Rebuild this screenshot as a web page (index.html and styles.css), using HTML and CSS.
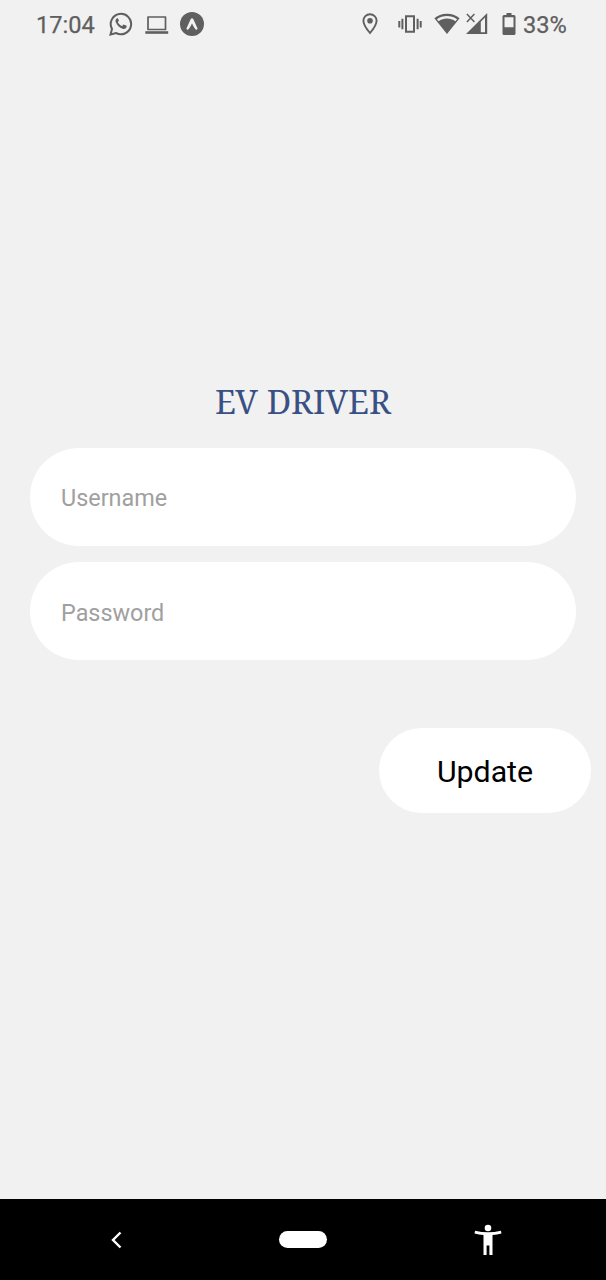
FILE: index.html
```html
<!DOCTYPE html>
<html lang="en">
<head>
<meta charset="utf-8">
<title>EV Driver</title>
<link rel="stylesheet" href="styles.css">
</head>
<body>
<div class="screen">
  <header class="status">
    <span class="clock">17:04</span>
    <svg class="icon whatsapp" width="24" height="24" viewBox="0 0 24 24"><path d="M1.5 22.5 3 17A10.2 10.2 0 1 1 7 21Z" fill="none" stroke="currentColor" stroke-width="2"/><path d="M8.1 6.2c-1.5.8-2 2.4-1.3 4.1 1.3 3.4 4 5.7 7.4 6.6 1.7.4 3.3-.6 3.5-2.3.1-.6-.1-.8-.6-1l-2-.9c-.4-.2-.7 0-1 .3l-.9 1.1c-2-.8-3.4-2.1-4.4-3.9l.8-1c.3-.4.3-.6.1-1.1l-.8-1.6c-.2-.4-.4-.5-.8-.3Z" fill="currentColor"/></svg>
    <svg class="icon laptop" width="24" height="20" viewBox="0 0 24 20"><path d="M3 2h17.500v12.500H3Z" fill="none" stroke="currentColor" stroke-width="1.700" stroke-linejoin="round"/><path d="M.3 16.200h22.900v2.600H.3Z" fill="currentColor"/></svg>
    <svg class="icon expo" width="24" height="24" viewBox="0 0 24 24"><circle cx="12" cy="12" r="12" fill="currentColor"/><path d="m6.300 16.700 4.200-9.300q1.500-2.400 3 0l4.200 9.300-1.500 1.200q-1.700-1.300-4.200-6.500-2.500 5.200-4.200 6.500Z" fill="#f1f1f1"/></svg>
    <div class="system">
      <svg class="icon pin" width="16" height="22" viewBox="0 0 16 22"><path d="M8 1.200a6.600 6.600 0 0 0-6.600 6.600c0 4.200 3.900 9.100 6.600 12.200 2.700-3.100 6.600-8 6.600-12.200A6.600 6.600 0 0 0 8 1.200Z" fill="none" stroke="currentColor" stroke-width="1.900"/><circle cx="8" cy="7.800" r="2.800" fill="currentColor"/></svg>
      <svg class="icon vibrate" width="24" height="18" viewBox="0 0 24 18"><path d="M8 1.300h8v15.400H8ZM4.400 3.800v10.400M19.600 3.800v10.400M1.300 6v6.500M22.700 6v6.500" fill="none" stroke="currentColor" stroke-width="2"/></svg>
      <svg class="icon wifi" width="26" height="22" viewBox="0 0 26 22"><path d="M13 .7C7.900.7 3.300 2.400.4 5.300L13 21 25.600 5.300C22.700 2.400 18.100.7 13 .7Z" fill="currentColor"/><path d="m2.900 6.200c5.900-4.300 14.300-4.300 20.200 0l-1.700 2.100c-4.900-3.600-11.900-3.600-16.800 0Z" fill="#f1f1f1"/></svg>
      <svg class="icon signal" width="22" height="22" viewBox="0 0 22 22"><path fill-rule="evenodd" d="M21.200 0V21H0ZM14.800 8.700V19.200H19V4.500Z" fill="currentColor"/><path d="m.9 1 7.500 8M8.400 1 .9 9" fill="none" stroke="currentColor" stroke-width="1.500"/></svg>
      <svg class="icon battery" width="14" height="22" viewBox="0 0 14 22"><path fill-rule="evenodd" d="M4.500 0h5v2H12q1.500 0 1.500 1.500v17Q13.500 22 12 22H2Q.5 22 .5 20.500v-17Q.5 2 2 2h2.500ZM2.500 4.300v10h9v-10Z" fill="currentColor"/></svg>
      <span class="percent">33%</span>
    </div>
  </header>
  <main class="login">
    <h1 class="title">EV DRIVER</h1>
    <input class="field" type="text" placeholder="Username" aria-label="Username">
    <input class="field password" type="password" placeholder="Password" aria-label="Password">
    <button class="update" type="button">Update</button>
  </main>
  <nav class="navbar">
    <svg class="back" width="12" height="18" viewBox="0 0 12 18"><path d="M10.500 1.500 3 9l7.500 7.500" fill="none" stroke="#fff" stroke-width="2.400"/></svg>
    <span class="home"></span>
    <svg class="access" width="28" height="32" viewBox="0 0 28 32"><circle cx="14" cy="4" r="3.300" fill="#fff"/><path d="M1.100 6.700Q14 9.900 26.900 6.700l.6 2.800q-4.500 1.100-9 1.500V31h-3.100v-9.400h-2.800V31H9.500V11q-4.500-.4-9-1.500Z" fill="#fff"/></svg>
  </nav>
</div>
</body>
</html>
```
FILE: styles.css
```css
* {
  box-sizing: border-box;
}
body {
  margin: 0;
  font-family: Roboto, sans-serif;
}
.screen {
  display: flex;
  flex-direction: column;
  height: 1280px;
  background: #f1f1f1;
}
.status {
  display: flex;
  align-items: center;
  height: 50px;
  padding: 0 39px 2px 36px;
  color: #5f5f5f;
}
.icon,
.back,
.access {
  display: block;
  flex: none;
}
.clock,
.percent {
  padding-top: 2px;
  font-size: 23.6px;
  font-weight: 400;
  white-space: nowrap;
  -webkit-text-stroke: 0.25px currentColor;
}
.clock {
  width: 73px;
}
.percent {
  width: 44px;
  margin-left: 7px;
}
.laptop {
  margin: 2px 11px 0 12px;
}
.system {
  display: flex;
  align-items: center;
  margin-left: auto;
}
.vibrate {
  margin: 0 12px 0 20px;
}
.signal {
  margin: 0 14px 0 6px;
}
.login {
  display: flex;
  flex: 1;
  flex-direction: column;
  padding: 330px 15px 0 30px;
}
.title {
  height: 44px;
  margin: 0 15px 24px 0;
  color: #395085;
  font-family: "Noto Serif", "Liberation Serif", serif;
  font-size: 33.6px;
  font-weight: 400;
  line-height: 42px;
  text-align: center;
}
.field {
  height: 98px;
  margin: 0 15px 16px 0;
  padding: 2px 31px 0;
  border: 0;
  border-radius: 49px;
  background: #fff;
  font-family: inherit;
  font-size: 23.4px;
}
.field::placeholder {
  color: #a0a0a0;
}
.password {
  padding-top: 4px;
}
.update {
  align-self: flex-end;
  width: 212px;
  height: 85px;
  margin-top: 52px;
  padding: 1px 0 0;
  border: 0;
  border-radius: 43px;
  background: #fff;
  color: #000;
  font-family: inherit;
  font-size: 30.3px;
}
.navbar {
  display: flex;
  align-items: center;
  height: 81px;
  padding-left: 110px;
  background: #000;
}
.home {
  width: 48px;
  height: 17px;
  margin: 0 147px 0 157px;
  border-radius: 9px;
  background: #fff;
}
```
